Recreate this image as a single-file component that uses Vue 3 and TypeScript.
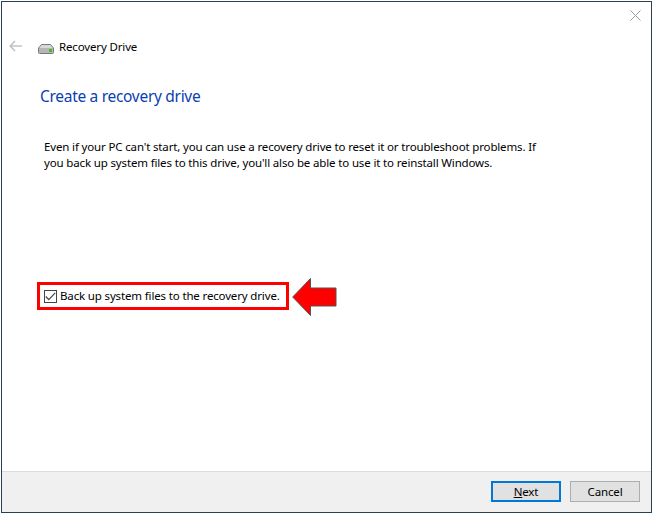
<script setup lang="ts">
const bodyText = "Even if your PC can't start, you can use a recovery drive to reset it or troubleshoot problems. If you back up system files to this drive, you'll also be able to use it to reinstall Windows.";
</script>

<template>
  <div class="page">
    <div class="window">
      <div class="main">
        <div class="close-row">
          <svg class="close" width="11" height="11" viewBox="0 0 11 11">
            <path d="M0.5 0.5L10.5 10.5M10.5 0.5L0.5 10.5" stroke="#9a9a9a" stroke-width="1" fill="none" />
          </svg>
        </div>
        <div class="nav">
          <svg class="back" width="13" height="12" viewBox="0 0 13 12">
            <path d="M6 1L1.2 6L6 11M1.2 6H13" stroke="#c4c4c4" stroke-width="1.7" fill="none" />
          </svg>
          <svg class="drive" width="16" height="10" viewBox="0 0 16 10">
            <path d="M3.5 0.5H12.5L15.5 4V8.5Q15.5 9.5 14.5 9.5H1.5Q0.5 9.5 0.5 8.5V4Z" fill="#d8d8d8" stroke="#77797a" />
            <rect x="1" y="4" width="14" height="5" fill="#b4b6b7" />
            <rect x="11" y="5" width="3" height="3" fill="#4fb81e" />
          </svg>
          <span class="nav-title">Recovery Drive</span>
        </div>
        <h1 class="heading">Create a recovery drive</h1>
        <p class="body">{{ bodyText }}</p>
        <div class="option-row">
          <label class="option">
            <span class="box">
              <svg width="11" height="9" viewBox="0 0 11 9">
                <path d="M0.8 4.5L3.8 7.6L10.2 0.8" stroke="#444" stroke-width="1.2" fill="none" />
              </svg>
            </span>
            <span class="option-text">Back up system files to the recovery drive.</span>
          </label>
          <svg class="arrow" width="45" height="38" viewBox="0 0 45 38">
            <path d="M18.5 0.5V10H44V28H18.5V37.5L0.7 19Z" fill="#ff0000" stroke="#555" stroke-width="1" />
          </svg>
        </div>
      </div>
      <div class="footer">
        <button class="btn primary"><span class="mnemonic">N</span>ext</button>
        <button class="btn">Cancel</button>
      </div>
    </div>
  </div>
</template>

<style>
html, body { margin: 0; background: #fff; }
</style>

<style scoped>
.page {
  width: 653px;
  height: 514px;
  padding: 1px;
  box-sizing: border-box;
  font-family: "Noto Sans", "Open Sans", sans-serif;
  font-size: 11.5px;
  letter-spacing: -0.15px;
  color: #000;
}
.window {
  height: 100%;
  box-sizing: border-box;
  border: 1px solid #2b3f50;
  display: flex;
  flex-direction: column;
  background: #fff;
}
.main { flex: 1; display: flex; flex-direction: column; }
.close-row { height: 26px; box-sizing: border-box; display: flex; justify-content: flex-end; padding: 8px 10px 0 0; }
.nav { display: flex; align-items: center; height: 17px; margin-top: 10px; padding-left: 7px; }
.back { margin-right: 16px; margin-top: -2px; }
.drive { margin-right: 5px; margin-top: 5px; }
.nav-title { line-height: 17px; }
.heading {
  margin: 31px 0 0 38px;
  font-size: 15.5px;
  font-weight: 400;
  letter-spacing: -0.3px;
  color: #0a3fb0;
  line-height: 20px;
}
.body {
  margin: 33px 0 0 42px;
  width: 500px;
  line-height: 16px;
}
.option-row {
  margin: 105px 0 0 35px;
  display: flex;
  align-items: center;
}
.option {
  width: 252px;
  height: 28px;
  box-sizing: border-box;
  border: 3px solid #ff0000;
  display: flex;
  align-items: center;
  padding-left: 4px;
  gap: 3px;
}
.option-text { white-space: nowrap; margin-bottom: 2px; }
.box {
  width: 13px;
  height: 13px;
  box-sizing: border-box;
  border: 1px solid #444;
  display: flex;
  align-items: center;
  justify-content: center;
  background: #fff;
}
.arrow { margin: 2px 0 0 3px; }
.footer {
  height: 41px;
  box-sizing: border-box;
  border-top: 1px solid #dcdcdc;
  background: #f0f0f0;
  display: flex;
  justify-content: flex-end;
  gap: 9px;
  padding: 9px 11px 0 0;
}
.btn {
  width: 70px;
  height: 21px;
  box-sizing: border-box;
  border: 1px solid #adadad;
  background: #e1e1e1;
  font: inherit;
  letter-spacing: inherit;
  color: #000;
  padding: 0;
  line-height: 17px;
}
.primary { border: 2px solid #0078d7; }
.mnemonic { text-decoration: underline; }
</style>
